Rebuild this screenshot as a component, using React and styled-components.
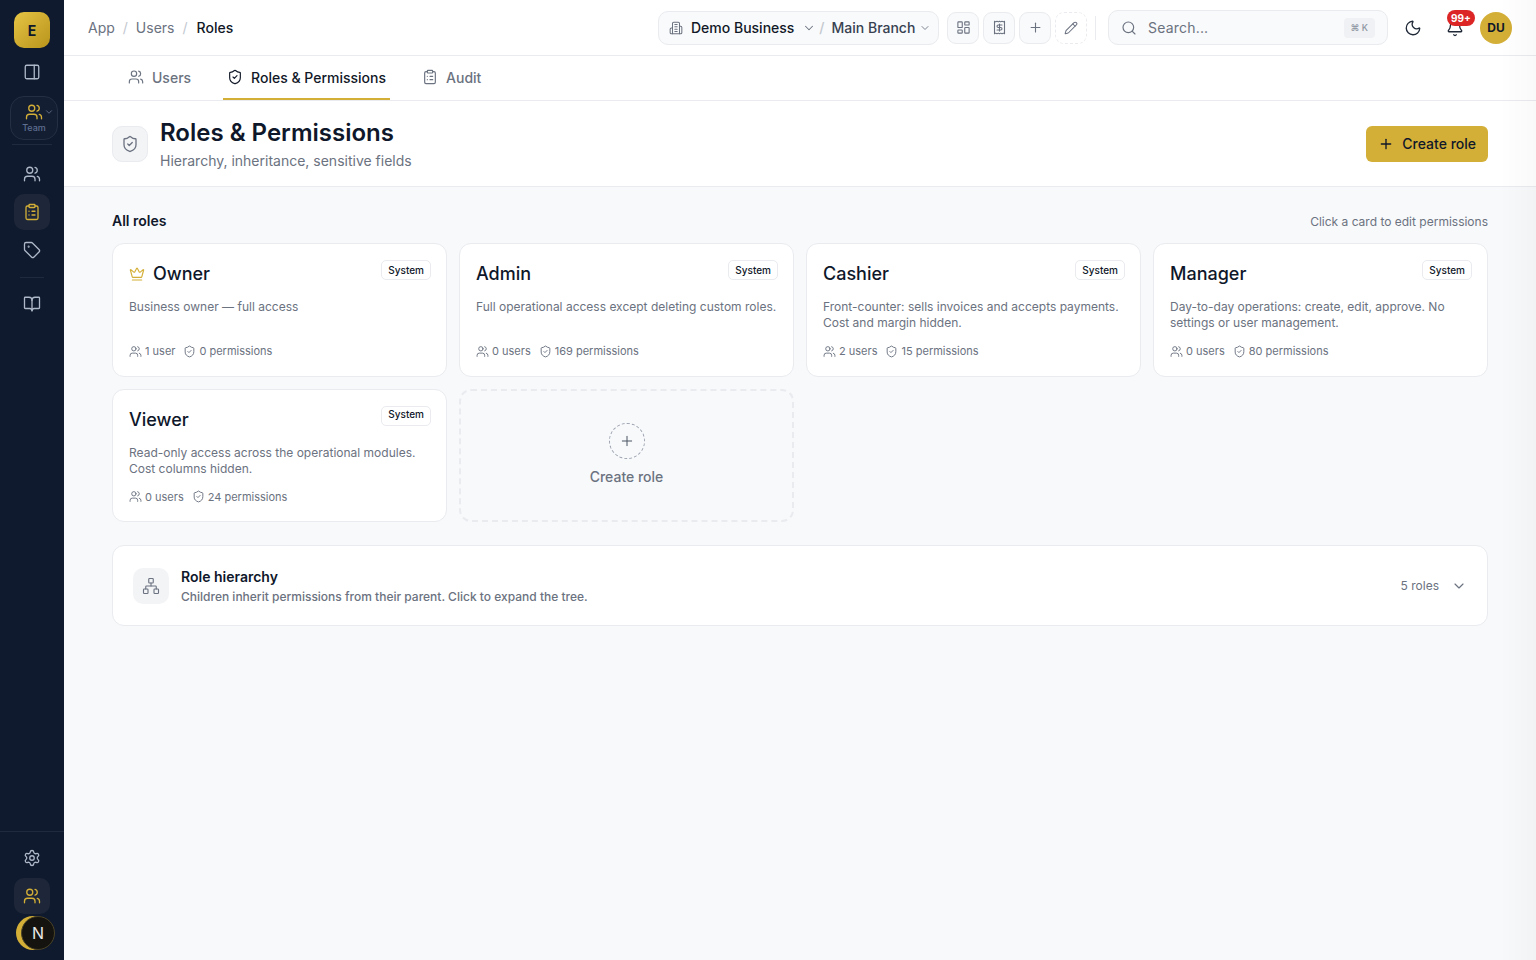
import styled, { createGlobalStyle } from "styled-components";
import {
  Bell,
  BookOpen,
  ChevronDown,
  ClipboardList,
  Crown,
  LayoutDashboard,
  Moon,
  Network,
  PanelRight,
  Pencil,
  Plus,
  Receipt,
  Search,
  Settings,
  ShieldCheck,
  Tag,
  Users,
} from "lucide-react";

const roles = [
  { name: "Owner", crown: true, text: "Business owner — full access", users: "1 user", perms: "0 permissions" },
  { name: "Admin", text: "Full operational access except deleting custom roles.", users: "0 users", perms: "169 permissions" },
  {
    name: "Cashier",
    text: "Front-counter: sells invoices and accepts payments. Cost and margin hidden.",
    users: "2 users",
    perms: "15 permissions",
  },
  {
    name: "Manager",
    text: "Day-to-day operations: create, edit, approve. No settings or user management.",
    users: "0 users",
    perms: "80 permissions",
  },
  {
    name: "Viewer",
    text: "Read-only access across the operational modules. Cost columns hidden.",
    users: "0 users",
    perms: "24 permissions",
    lastRow: true,
  },
];

function BuildingIcon() {
  return (
    <svg width="14" height="14" viewBox="0 0 24 24" fill="none" stroke="#6b7280" strokeWidth="1.75" strokeLinecap="round" strokeLinejoin="round">
      <path d="M6 22V4a2 2 0 0 1 2-2h8a2 2 0 0 1 2 2v18Z" />
      <path d="M6 12H4a2 2 0 0 0-2 2v6a2 2 0 0 0 2 2h2" />
      <path d="M18 9h2a2 2 0 0 1 2 2v9a2 2 0 0 1-2 2h-2" />
      <path d="M10 6h4M10 10h4M10 14h4M10 18h4" />
    </svg>
  );
}

function App() {
  return (
    <Shell>
      <GlobalStyle />
      <Sidebar>
        <Logo>E</Logo>
        <RailButton>
          <PanelRight size={18} strokeWidth={1.75} />
        </RailButton>
        <TeamSwitch>
          <TeamIcon>
            <Users size={18} strokeWidth={1.75} />
            <ChevronDown size={10} />
          </TeamIcon>
          <span>Team</span>
        </TeamSwitch>
        <RailDivider $wide />
        <RailGroup>
          <RailButton>
            <Users size={18} strokeWidth={1.75} />
          </RailButton>
          <RailButton $active>
            <ClipboardList size={18} strokeWidth={1.75} />
          </RailButton>
          <RailButton>
            <Tag size={18} strokeWidth={1.75} />
          </RailButton>
        </RailGroup>
        <RailDivider />
        <RailButton>
          <BookOpen size={18} strokeWidth={1.75} />
        </RailButton>
        <RailFooter>
          <RailButton>
            <Settings size={18} strokeWidth={1.75} />
          </RailButton>
          <RailButton $active>
            <Users size={18} strokeWidth={1.75} />
          </RailButton>
        </RailFooter>
      </Sidebar>

      <Main>
        <TopBar>
          <Breadcrumbs>
            <span>App</span>
            <Slash>/</Slash>
            <span>Users</span>
            <Slash>/</Slash>
            <strong>Roles</strong>
          </Breadcrumbs>
          <BranchPicker>
            <BuildingIcon />
            <BusinessName>Demo Business</BusinessName>
            <ChevronDown size={14} color="#6b7280" strokeWidth={1.75} />
            <PickerSlash>/</PickerSlash>
            <BranchName>Main Branch</BranchName>
            <ChevronDown size={12} color="#6b7280" strokeWidth={1.75} />
          </BranchPicker>
          <ToolButton>
            <LayoutDashboard size={15} strokeWidth={1.75} />
          </ToolButton>
          <ToolButton>
            <Receipt size={15} strokeWidth={1.75} />
          </ToolButton>
          <ToolButton>
            <Plus size={15} strokeWidth={1.75} />
          </ToolButton>
          <ToolButton $dashed>
            <Pencil size={14} strokeWidth={1.75} />
          </ToolButton>
          <BarDivider />
          <SearchBox>
            <Search size={16} color="#6b7280" strokeWidth={1.75} />
            <SearchText>Search...</SearchText>
            <Kbd>⌘ K</Kbd>
          </SearchBox>
          <IconButton>
            <Moon size={18} strokeWidth={1.75} />
          </IconButton>
          <IconButton $last>
            <Bell size={18} strokeWidth={1.75} />
            <Badge>99+</Badge>
          </IconButton>
          <Avatar>DU</Avatar>
        </TopBar>

        <Tabs>
          <Tab>
            <Users size={16} strokeWidth={1.75} />
            Users
          </Tab>
          <Tab $active>
            <ShieldCheck size={16} strokeWidth={1.75} />
            Roles &amp; Permissions
          </Tab>
          <Tab>
            <ClipboardList size={16} strokeWidth={1.75} />
            Audit
          </Tab>
        </Tabs>

        <PageHeader>
          <HeaderIcon>
            <ShieldCheck size={18} strokeWidth={1.75} />
          </HeaderIcon>
          <HeaderText>
            <h1>Roles &amp; Permissions</h1>
            <p>Hierarchy, inheritance, sensitive fields</p>
          </HeaderText>
          <PrimaryButton>
            <Plus size={16} strokeWidth={2} />
            Create role
          </PrimaryButton>
        </PageHeader>

        <Content>
          <SectionHead>
            <h2>All roles</h2>
            <span>Click a card to edit permissions</span>
          </SectionHead>
          <RoleGrid>
            {roles.map((role) => (
              <RoleCard key={role.name}>
                <CardTop>
                  {role.crown && <Crown size={16} color="#d4af37" strokeWidth={1.75} />}
                  <h3>{role.name}</h3>
                  <SystemTag $lift={role.lastRow}>System</SystemTag>
                </CardTop>
                <CardText>{role.text}</CardText>
                <CardStats>
                  <Users size={13} strokeWidth={1.75} />
                  <span>{role.users}</span>
                  <ShieldCheck size={13} strokeWidth={1.75} />
                  <span>{role.perms}</span>
                </CardStats>
              </RoleCard>
            ))}
            <NewRoleCard>
              <NewRoleCircle>
                <Plus size={16} strokeWidth={1.5} />
              </NewRoleCircle>
              Create role
            </NewRoleCard>
          </RoleGrid>

          <HierarchyCard>
            <HierarchyIcon>
              <Network size={18} strokeWidth={1.5} />
            </HierarchyIcon>
            <HierarchyText>
              <strong>Role hierarchy</strong>
              <span>Children inherit permissions from their parent. Click to expand the tree.</span>
            </HierarchyText>
            <HierarchyCount>5 roles</HierarchyCount>
            <ChevronDown size={16} color="#6b7280" strokeWidth={1.75} />
          </HierarchyCard>
        </Content>
      </Main>

      <DevBadge>
        <DevBadgeInner>N</DevBadgeInner>
      </DevBadge>
      <EdgeFade />
    </Shell>
  );
}

export default App;

const GlobalStyle = createGlobalStyle`
  * {
    box-sizing: border-box;
  }

  html, body {
    margin: 0;
    height: 100%;
  }

  body {
    font-family: Inter, "Liberation Sans", sans-serif;
    color: #0f172a;
    background: #f8f9fb;
  }

  h1, h2, h3, p {
    margin: 0;
  }
`;

const Shell = styled.div`
  display: flex;
  height: 960px;
  overflow: hidden;
`;

const Sidebar = styled.aside`
  width: 64px;
  flex-shrink: 0;
  background: #0f1a2e;
  display: flex;
  flex-direction: column;
  align-items: center;
  padding-top: 12px;
`;

const Logo = styled.div`
  width: 36px;
  height: 36px;
  border-radius: 10px;
  background: linear-gradient(135deg, #e6c443, #b8941c);
  color: #0f172a;
  font-size: 14px;
  font-weight: 700;
  display: flex;
  align-items: center;
  justify-content: center;
  margin-bottom: 6px;
`;

const RailButton = styled.div`
  width: 36px;
  height: 36px;
  border-radius: 10px;
  display: flex;
  align-items: center;
  justify-content: center;
  flex-shrink: 0;
  color: ${(p) => (p.$active ? "#d4af37" : "#aeb8c8")};
  background: ${(p) => (p.$active ? "#1e2739" : "transparent")};
`;

const TeamSwitch = styled.div`
  width: 48px;
  height: 44px;
  margin: 6px 0 0 4px;
  border: 1px solid #252f43;
  border-radius: 14px;
  background: #141e33;
  display: flex;
  flex-direction: column;
  align-items: center;
  justify-content: center;
  color: #5f6f91;
  font-size: 9px;
  font-weight: 500;
  line-height: 11px;
`;

const TeamIcon = styled.div`
  display: flex;
  align-items: center;
  color: #d4af37;
  margin-left: 10px;
  margin-bottom: 1px;

  svg:last-child {
    color: #6b7690;
    margin-left: 1px;
  }
`;

const RailDivider = styled.div`
  width: ${(p) => (p.$wide ? "40px" : "24px")};
  height: 1px;
  background: #1f2a3f;
  margin: ${(p) => (p.$wide ? "4px 0 11px" : "9px 0 8px")};
`;

const RailGroup = styled.div`
  display: flex;
  flex-direction: column;
  align-items: center;
  gap: 2px;
`;

const RailFooter = styled.div`
  margin-top: auto;
  width: 100%;
  height: 129px;
  border-top: 1px solid #1f2a3f;
  display: flex;
  flex-direction: column;
  align-items: center;
  padding-top: 8px;
  gap: 2px;
`;

const Main = styled.main`
  flex: 1;
  min-width: 0;
  display: flex;
  flex-direction: column;
`;

const TopBar = styled.header`
  height: 56px;
  flex-shrink: 0;
  background: #fff;
  border-bottom: 1px solid #e9ebef;
  display: flex;
  align-items: center;
  padding: 0 24px;
`;

const Breadcrumbs = styled.nav`
  display: flex;
  align-items: center;
  gap: 8px;
  font-size: 14px;
  color: #6b7280;
  margin-right: auto;

  strong {
    color: #111827;
    font-weight: 500;
    margin-left: 1px;
  }
`;

const Slash = styled.span`
  color: #c3c8d0;
`;

const PickerSlash = styled(Slash)`
  margin: 0 7px 0 3px;
`;

const BranchPicker = styled.div`
  height: 34px;
  width: 281px;
  border: 1px solid #e9ebef;
  border-radius: 10px;
  background: #f9fafb;
  display: flex;
  align-items: center;
  padding: 0 7px 0 10px;
  font-size: 14px;
  font-weight: 500;
  white-space: nowrap;
  margin-right: 8px;

  svg {
    flex-shrink: 0;
  }
`;

const BusinessName = styled.span`
  color: #111827;
  margin: 0 8px;
`;

const BranchName = styled.span`
  color: #374151;
  margin-right: 4px;
`;

const ToolButton = styled.div`
  width: 32px;
  height: 32px;
  margin-right: 4px;
  border-radius: 9px;
  border: 1px ${(p) => (p.$dashed ? "dashed" : "solid")} #e9ebef;
  background: ${(p) => (p.$dashed ? "#fff" : "#f9fafb")};
  color: #6b7280;
  display: flex;
  align-items: center;
  justify-content: center;
`;

const BarDivider = styled.div`
  width: 1px;
  height: 24px;
  background: #e9ebef;
  margin: 0 12px 0 4px;
`;

const SearchBox = styled.div`
  width: 280px;
  height: 35px;
  border: 1px solid #e9ebef;
  border-radius: 10px;
  background: #f9fafb;
  display: flex;
  align-items: center;
  padding: 0 12px;
  gap: 11px;
`;

const SearchText = styled.span`
  flex: 1;
  font-size: 14px;
  letter-spacing: 0.2px;
  color: #6b7280;
`;

const Kbd = styled.span`
  height: 20px;
  padding: 0 7px;
  border-radius: 4px;
  background: #f0f1f4;
  color: #8b93a1;
  font-size: 9px;
  line-height: 20px;
  font-weight: 500;
`;

const IconButton = styled.div`
  position: relative;
  width: 18px;
  height: 18px;
  margin-left: 16px;
  margin-right: ${(p) => (p.$last ? "16px" : "8px")};
  color: #1f2937;
`;

const Badge = styled.span`
  position: absolute;
  top: -9px;
  left: 1px;
  height: 16px;
  min-width: 28px;
  padding: 0 4px;
  border-radius: 8px;
  background: #dc2626;
  color: #fff;
  font-size: 10px;
  font-weight: 700;
  line-height: 16px;
  text-align: center;
`;

const Avatar = styled.div`
  width: 32px;
  height: 32px;
  border-radius: 50%;
  background: #d4af37;
  color: #0f172a;
  font-size: 12px;
  font-weight: 700;
  display: flex;
  align-items: center;
  justify-content: center;
`;

const Tabs = styled.nav`
  height: 45px;
  flex-shrink: 0;
  background: #fff;
  border-bottom: 1px solid #e9ebef;
  display: flex;
  gap: 28px;
  padding-left: 60px;
`;

const Tab = styled.div`
  display: flex;
  align-items: center;
  gap: 8px;
  padding: 0 4px;
  height: 44px;
  font-size: 14px;
  font-weight: 500;
  color: ${(p) => (p.$active ? "#111827" : "#6b7280")};
  border-bottom: 2px solid ${(p) => (p.$active ? "#d4af37" : "transparent")};

  svg {
    flex-shrink: 0;
  }
`;

const PageHeader = styled.div`
  height: 86px;
  flex-shrink: 0;
  background: #fff;
  border-bottom: 1px solid #e9ebef;
  display: flex;
  align-items: center;
  padding: 0 48px;
`;

const HeaderIcon = styled.div`
  width: 36px;
  height: 36px;
  border-radius: 10px;
  border: 1px solid #e9ebef;
  background: #f3f4f6;
  color: #6b7280;
  display: flex;
  align-items: center;
  justify-content: center;
  margin-right: 12px;
`;

const HeaderText = styled.div`
  flex: 1;

  h1 {
    font-size: 24px;
    line-height: 32px;
    font-weight: 600;
    color: #0f172a;
    margin-bottom: 2px;
  }

  p {
    font-size: 14px;
    line-height: 20px;
    color: #6b7280;
  }
`;

const PrimaryButton = styled.div`
  height: 36px;
  padding: 0 12px;
  border-radius: 6px;
  background: #d4af37;
  color: #0f172a;
  font-size: 14px;
  font-weight: 500;
  display: flex;
  align-items: center;
  gap: 8px;
`;

const Content = styled.div`
  flex: 1;
  padding: 25px 48px;
  background: #f8f9fb;
`;

const SectionHead = styled.div`
  display: flex;
  align-items: baseline;
  justify-content: space-between;
  height: 20px;
  margin-bottom: 11px;

  h2 {
    font-size: 14px;
    font-weight: 600;
    color: #0f172a;
  }

  span {
    font-size: 12px;
    color: #6b7280;
  }
`;

const RoleGrid = styled.div`
  display: grid;
  grid-template-columns: repeat(4, 1fr);
  gap: 12px;
`;

const RoleCard = styled.div`
  height: 133.5px;
  padding: 16px 15px 16.5px 16px;
  border: 1px solid #e9ebef;
  border-radius: 12px;
  background: #fff;
  display: flex;
  flex-direction: column;
`;

const CardTop = styled.div`
  display: flex;
  align-items: center;
  gap: 8px;
  height: 28px;

  h3 {
    flex: 1;
    font-size: 18px;
    line-height: 28px;
    font-weight: 500;
    color: #0f172a;
  }
`;

const SystemTag = styled.span`
  align-self: flex-start;
  height: 20px;
  padding: 0 6px;
  border: 1px solid #e9ebef;
  border-radius: 5px;
  background: #fff;
  font-size: 10px;
  line-height: ${(p) => (p.$lift ? "15px" : "18px")};
  font-weight: 500;
  color: #0f172a;
`;

const CardText = styled.p`
  margin-top: 11px;
  font-size: 12px;
  line-height: 16px;
  height: 32px;
  color: #6b7280;
`;

const CardStats = styled.div`
  margin-top: auto;
  display: flex;
  align-items: center;
  font-size: 11px;
  line-height: 16px;
  color: #6b7280;

  span {
    margin: 0 8px 0 3px;
  }
`;

const NewRoleCard = styled.div`
  border: 2px dashed #e9ebef;
  border-radius: 12px;
  display: flex;
  flex-direction: column;
  align-items: center;
  justify-content: center;
  gap: 9px;
  padding-bottom: 3px;
  font-size: 14px;
  font-weight: 500;
  color: #6b7280;
`;

const NewRoleCircle = styled.div`
  width: 36px;
  height: 36px;
  border-radius: 50%;
  border: 1px dashed #9ca3af;
  color: #4b5563;
  display: flex;
  align-items: center;
  justify-content: center;
`;

const HierarchyCard = styled.div`
  margin-top: 23px;
  height: 81px;
  padding: 0 20px;
  border: 1px solid #e9ebef;
  border-radius: 12px;
  background: #fff;
  display: flex;
  align-items: center;
`;

const HierarchyIcon = styled.div`
  width: 36px;
  height: 36px;
  border-radius: 10px;
  background: #f3f4f6;
  color: #6b7280;
  display: flex;
  align-items: center;
  justify-content: center;
  margin-right: 12px;
`;

const HierarchyText = styled.div`
  flex: 1;
  display: flex;
  flex-direction: column;
  gap: 2px;
  padding-top: 1px;

  strong {
    font-size: 14px;
    line-height: 20px;
    font-weight: 600;
    color: #0f172a;
  }

  span {
    font-size: 12px;
    line-height: 16px;
    font-weight: 500;
    color: #6b7280;
  }
`;

const HierarchyCount = styled.span`
  font-size: 12px;
  color: #6b7280;
  margin-right: 12px;
`;

const DevBadge = styled.div`
  position: fixed;
  left: 16px;
  top: 916px;
  width: 34px;
  height: 34px;
  border-radius: 50%;
  background: #d4af37;
`;

const DevBadgeInner = styled.div`
  position: absolute;
  left: 5px;
  top: 0;
  width: 34px;
  height: 34px;
  border-radius: 50%;
  border: 1px solid #4a4327;
  background: #15130f;
  color: #e8e8e8;
  font-size: 16px;
  font-weight: 400;
  display: flex;
  align-items: center;
  justify-content: center;
`;

const EdgeFade = styled.div`
  position: fixed;
  top: 0;
  right: 0;
  width: 36px;
  height: 100%;
  pointer-events: none;
  background: linear-gradient(to right, transparent, rgba(0, 0, 0, 0.025));
`;
